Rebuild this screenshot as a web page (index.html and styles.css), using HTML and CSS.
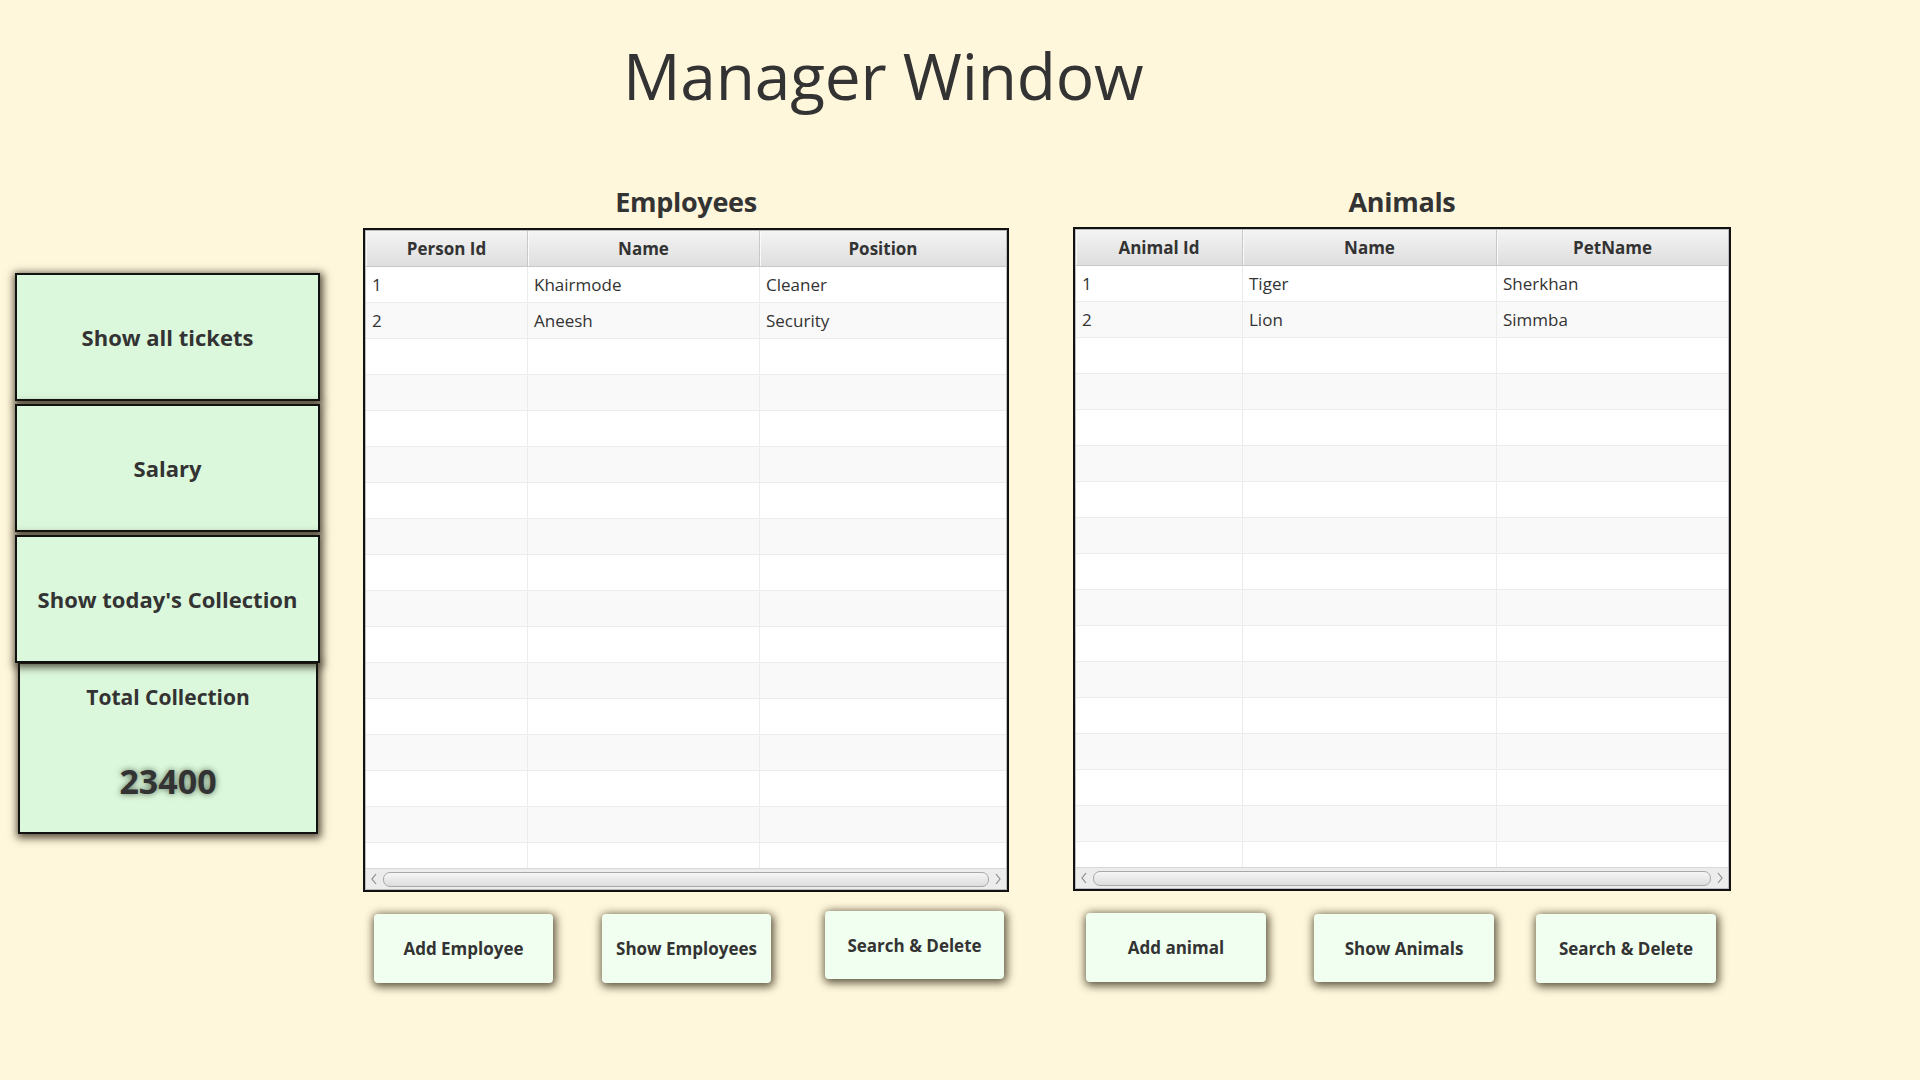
FILE: index.html
```html
<!DOCTYPE html>
<html lang="en">
<head>
<meta charset="utf-8">
<title>Manager Window</title>
<link rel="stylesheet" href="styles.css">
</head>
<body>
<header class="header">
  <h1 class="title">Manager Window</h1>
</header>
<main class="main">
  <aside class="sidebar">
    <button class="side-btn">Show all tickets</button>
    <button class="side-btn">Salary</button>
    <button class="side-btn">Show today's Collection</button>
    <div class="total">
      <div class="total-label">Total Collection</div>
      <div class="total-value">23400</div>
    </div>
  </aside>

  <section class="panel panel-emp">
    <h2 class="panel-title">Employees</h2>
    <div class="table">
      <div class="thead">
        <div class="th c1">Person Id</div>
        <div class="th c2">Name</div>
        <div class="th c3">Position</div>
      </div>
      <div class="tbody">
        <div class="tr"><div class="td c1">1</div><div class="td c2">Khairmode</div><div class="td c3">Cleaner</div></div>
        <div class="tr"><div class="td c1">2</div><div class="td c2">Aneesh</div><div class="td c3">Security</div></div>
        <div class="tr"><div class="td c1"></div><div class="td c2"></div><div class="td c3"></div></div>
        <div class="tr"><div class="td c1"></div><div class="td c2"></div><div class="td c3"></div></div>
        <div class="tr"><div class="td c1"></div><div class="td c2"></div><div class="td c3"></div></div>
        <div class="tr"><div class="td c1"></div><div class="td c2"></div><div class="td c3"></div></div>
        <div class="tr"><div class="td c1"></div><div class="td c2"></div><div class="td c3"></div></div>
        <div class="tr"><div class="td c1"></div><div class="td c2"></div><div class="td c3"></div></div>
        <div class="tr"><div class="td c1"></div><div class="td c2"></div><div class="td c3"></div></div>
        <div class="tr"><div class="td c1"></div><div class="td c2"></div><div class="td c3"></div></div>
        <div class="tr"><div class="td c1"></div><div class="td c2"></div><div class="td c3"></div></div>
        <div class="tr"><div class="td c1"></div><div class="td c2"></div><div class="td c3"></div></div>
        <div class="tr"><div class="td c1"></div><div class="td c2"></div><div class="td c3"></div></div>
        <div class="tr"><div class="td c1"></div><div class="td c2"></div><div class="td c3"></div></div>
        <div class="tr"><div class="td c1"></div><div class="td c2"></div><div class="td c3"></div></div>
        <div class="tr"><div class="td c1"></div><div class="td c2"></div><div class="td c3"></div></div>
        <div class="tr"><div class="td c1"></div><div class="td c2"></div><div class="td c3"></div></div>
      </div>
      <div class="hscroll">
        <svg class="arrow" viewBox="0 0 8 12" width="8" height="12"><path d="M6 1 L2 6 L6 11" fill="none" stroke="#8c8c8c" stroke-width="1.2"/></svg>
        <span class="thumb"></span>
        <svg class="arrow" viewBox="0 0 8 12" width="8" height="12"><path d="M2 1 L6 6 L2 11" fill="none" stroke="#8c8c8c" stroke-width="1.2"/></svg>
      </div>
    </div>
    <div class="actions">
      <button class="act-btn eb1">Add Employee</button>
      <button class="act-btn eb2">Show Employees</button>
      <button class="act-btn eb3">Search &amp; Delete</button>
    </div>
  </section>

  <section class="panel panel-ani">
    <h2 class="panel-title">Animals</h2>
    <div class="table">
      <div class="thead">
        <div class="th c1">Animal Id</div>
        <div class="th c2">Name</div>
        <div class="th c3">PetName</div>
      </div>
      <div class="tbody">
        <div class="tr"><div class="td c1">1</div><div class="td c2">Tiger</div><div class="td c3">Sherkhan</div></div>
        <div class="tr"><div class="td c1">2</div><div class="td c2">Lion</div><div class="td c3">Simmba</div></div>
        <div class="tr"><div class="td c1"></div><div class="td c2"></div><div class="td c3"></div></div>
        <div class="tr"><div class="td c1"></div><div class="td c2"></div><div class="td c3"></div></div>
        <div class="tr"><div class="td c1"></div><div class="td c2"></div><div class="td c3"></div></div>
        <div class="tr"><div class="td c1"></div><div class="td c2"></div><div class="td c3"></div></div>
        <div class="tr"><div class="td c1"></div><div class="td c2"></div><div class="td c3"></div></div>
        <div class="tr"><div class="td c1"></div><div class="td c2"></div><div class="td c3"></div></div>
        <div class="tr"><div class="td c1"></div><div class="td c2"></div><div class="td c3"></div></div>
        <div class="tr"><div class="td c1"></div><div class="td c2"></div><div class="td c3"></div></div>
        <div class="tr"><div class="td c1"></div><div class="td c2"></div><div class="td c3"></div></div>
        <div class="tr"><div class="td c1"></div><div class="td c2"></div><div class="td c3"></div></div>
        <div class="tr"><div class="td c1"></div><div class="td c2"></div><div class="td c3"></div></div>
        <div class="tr"><div class="td c1"></div><div class="td c2"></div><div class="td c3"></div></div>
        <div class="tr"><div class="td c1"></div><div class="td c2"></div><div class="td c3"></div></div>
        <div class="tr"><div class="td c1"></div><div class="td c2"></div><div class="td c3"></div></div>
        <div class="tr"><div class="td c1"></div><div class="td c2"></div><div class="td c3"></div></div>
      </div>
      <div class="hscroll">
        <svg class="arrow" viewBox="0 0 8 12" width="8" height="12"><path d="M6 1 L2 6 L6 11" fill="none" stroke="#8c8c8c" stroke-width="1.2"/></svg>
        <span class="thumb"></span>
        <svg class="arrow" viewBox="0 0 8 12" width="8" height="12"><path d="M2 1 L6 6 L2 11" fill="none" stroke="#8c8c8c" stroke-width="1.2"/></svg>
      </div>
    </div>
    <div class="actions">
      <button class="act-btn ab1">Add animal</button>
      <button class="act-btn ab2">Show Animals</button>
      <button class="act-btn ab3">Search &amp; Delete</button>
    </div>
  </section>
</main>
</body>
</html>
```
FILE: styles.css
```css
* { box-sizing: border-box; }

html, body {
  margin: 0;
  padding: 0;
}

body {
  width: 1920px;
  height: 1080px;
  overflow: hidden;
  background: #fff7dc;
  color: #333333;
  font-family: "Open Sans", "Noto Sans", "Liberation Sans", sans-serif;
}

.header {
  height: 176px;
  padding: 36px 0 0 623px;
}

.title {
  margin: 0;
  font-size: 64px;
  font-weight: 400;
  line-height: 80px;
  letter-spacing: -0.2px;
  color: #333333;
}

.main {
  display: flex;
  align-items: flex-start;
  padding-left: 15px;
}

/* ---------- sidebar ---------- */
.sidebar {
  width: 305px;
  margin-top: 97px;
  display: flex;
  flex-direction: column;
}

.side-btn {
  position: relative;
  z-index: 2;
  height: 128px;
  margin-bottom: 3px;
  background: #dcf8dc;
  border: 2px solid #111111;
  box-shadow: 1px 2px 8px 2px rgba(40, 32, 16, 0.8);
  font-family: inherit;
  font-size: 22px;
  font-weight: 700;
  color: #333333;
  padding: 0;
}

.total {
  position: relative;
  z-index: 1;
  width: 300px;
  height: 172px;
  margin: -4px 0 0 3px;
  background: #dcf8dc;
  border: 2px solid #111111;
  box-shadow: 1px 2px 8px 2px rgba(40, 32, 16, 0.8);
  text-align: center;
}

.total-label {
  margin-top: 18px;
  font-size: 21px;
  font-weight: 700;
  line-height: 30px;
}

.total-value {
  margin-top: 49px;
  font-size: 34px;
  font-weight: 700;
  line-height: 40px;
  text-shadow: 0 0 6px rgba(40, 60, 40, 0.75);
}

/* ---------- panels ---------- */
.panel {
  display: flex;
  flex-direction: column;
}

.panel-emp {
  width: 646px;
  margin-left: 43px;
}

.panel-ani {
  width: 658px;
  margin-left: 64px;
}

.panel-title {
  margin: 0;
  height: 52px;
  padding-top: 8px;
  text-align: center;
  font-size: 27px;
  font-weight: 700;
  line-height: 36px;
  letter-spacing: -0.3px;
}

.panel-ani .panel-title {
  height: 51px;
}

.table {
  height: 664px;
  border: 2px solid #111111;
  background: #ffffff;
  display: flex;
  flex-direction: column;
  box-shadow: inset 0 0 0 1px #bdbdbd;
  padding: 1px;
}

.thead {
  display: flex;
  height: 36px;
  flex: none;
  background: linear-gradient(#f4f4f4, #dedede);
  border-bottom: 1px solid #c8c8c8;
}

.th {
  display: flex;
  align-items: center;
  justify-content: center;
  font-size: 17px;
  font-weight: 700;
  color: #333333;
  border-right: 1px solid #c8c8c8;
  box-shadow: inset 1px 0 0 #fafafa;
}

.th.c3 { border-right: none; }

.tbody {
  flex: 1;
  overflow: hidden;
}

.tr {
  display: flex;
  height: 36px;
  border-bottom: 1px solid #ececec;
  background: #ffffff;
}

.tr:nth-child(even) { background: #f9f9f9; }

.td {
  display: flex;
  align-items: center;
  padding-left: 6px;
  font-size: 17px;
  color: #333333;
  border-right: 1px solid #ececec;
}

.td.c3 { border-right: none; }

.panel-emp .c1 { width: 162px; }
.panel-emp .c2 { width: 232px; }
.panel-emp .c3 { flex: 1; }

.panel-ani .c1 { width: 167px; }
.panel-ani .c2 { width: 254px; }
.panel-ani .c3 { flex: 1; }

.hscroll {
  flex: none;
  height: 21px;
  display: flex;
  align-items: center;
  gap: 5px;
  padding: 0 4px;
  background: #ececec;
  border-top: 1px solid #d8d8d8;
}

.arrow {
  flex: none;
  display: block;
}

.thumb {
  flex: 1;
  height: 15px;
  border: 1px solid #a8a8a8;
  border-radius: 7px;
  background: linear-gradient(#f6f6f6, #dddddd);
}

/* ---------- action buttons ---------- */
.actions {
  display: flex;
  align-items: flex-start;
  margin-top: 22px;
}

.act-btn {
  height: 69px;
  width: 180px;
  background: #f0fff0;
  border: none;
  border-radius: 4px;
  box-shadow: 1px 2px 9px 2px rgba(50, 42, 20, 0.78);
  font-family: inherit;
  font-size: 17px;
  font-weight: 700;
  color: #333333;
  padding: 0;
}

.eb1 { margin-left: 11px; width: 179px; }
.eb2 { margin-left: 49px; width: 169px; }
.eb3 { margin-left: 54px; width: 179px; margin-top: -3px; height: 68px; }

.ab1 { margin-left: 13px; }
.ab2 { margin-left: 48px; margin-top: 1px; height: 68px; }
.ab3 { margin-left: 42px; margin-top: 1px; height: 69px; }
```
